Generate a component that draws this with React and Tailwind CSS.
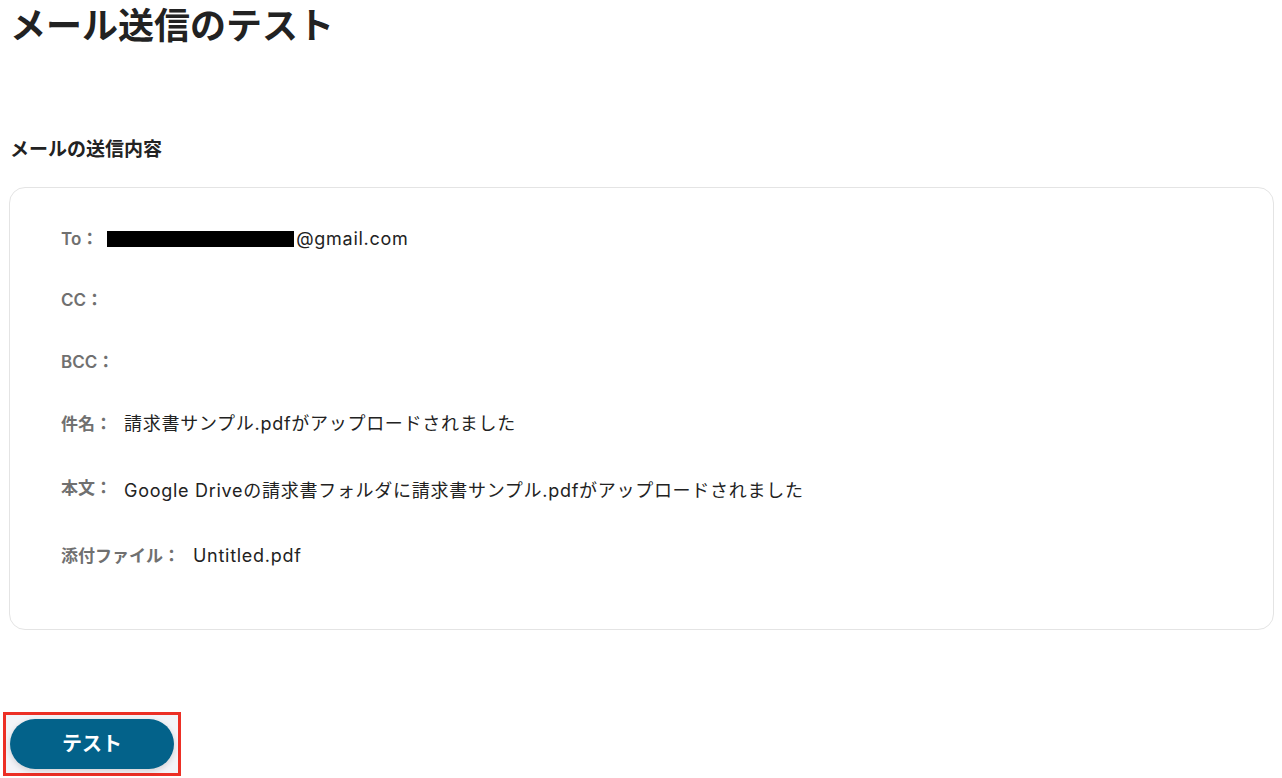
export default function App() {
  const font = { fontFamily: 'Inter, "Noto Sans CJK JP", sans-serif' };
  const rowLabel = "text-[17px] font-semibold text-[#707070] leading-[24px] shrink-0";
  const rowValue = "text-[18px] text-[#222] leading-[24px] tracking-[0.04em]";
  return (
    <div className="w-[1282px] h-[778px] overflow-hidden bg-white relative" style={font}>
      <div className="pl-[10px] pr-[8px]">
        <h1 className="pt-[2px] text-[36px] font-bold leading-[48px] text-[#222]">メール送信のテスト</h1>
        <h2 className="mt-[86px] text-[19px] font-bold leading-[28px] text-[#222]">メールの送信内容</h2>
        <div className="mt-[23px] -ml-[1px] h-[443px] rounded-[16px] border border-[#e4e4e4] pl-[51px] pt-[39px]">
          <div className="flex items-center gap-[9px]">
            <span className={rowLabel}>To：</span>
            <span className={rowValue + " flex items-center"}>
              <span className="inline-block w-[187px] h-[16px] bg-black"></span>
              <span className="ml-[2px]">@gmail.com</span>
            </span>
          </div>
          <div className="mt-[37px] flex items-center">
            <span className={rowLabel}>CC：</span>
          </div>
          <div className="mt-[38px] flex items-center">
            <span className={rowLabel}>BCC：</span>
          </div>
          <div className="mt-[38px] flex items-center gap-[12px]">
            <span className={rowLabel}>件名：</span>
            <span className={rowValue}>請求書サンプル.pdfがアップロードされました</span>
          </div>
          <div className="mt-[40px] flex items-start gap-[12px]">
            <span className={rowLabel}>本文：</span>
            <span className={rowValue + " mt-[3px]"}>Google Driveの請求書フォルダに請求書サンプル.pdfがアップロードされました</span>
          </div>
          <div className="mt-[41px] flex items-center gap-[13px]">
            <span className={rowLabel}>添付ファイル：</span>
            <span className={rowValue}>Untitled.pdf</span>
          </div>
        </div>
        <div className="mt-[82px] -ml-[7px] inline-block border-[3px] border-[#ec2f25] p-[4px] bg-[#f3f4f8]">
          <button className="w-[164px] h-[50px] rounded-full bg-[#03628a] text-white text-[20px] font-bold leading-[50px] shadow-[0_2px_6px_rgba(0,0,0,0.15)]">
            テスト
          </button>
        </div>
      </div>
    </div>
  );
}
